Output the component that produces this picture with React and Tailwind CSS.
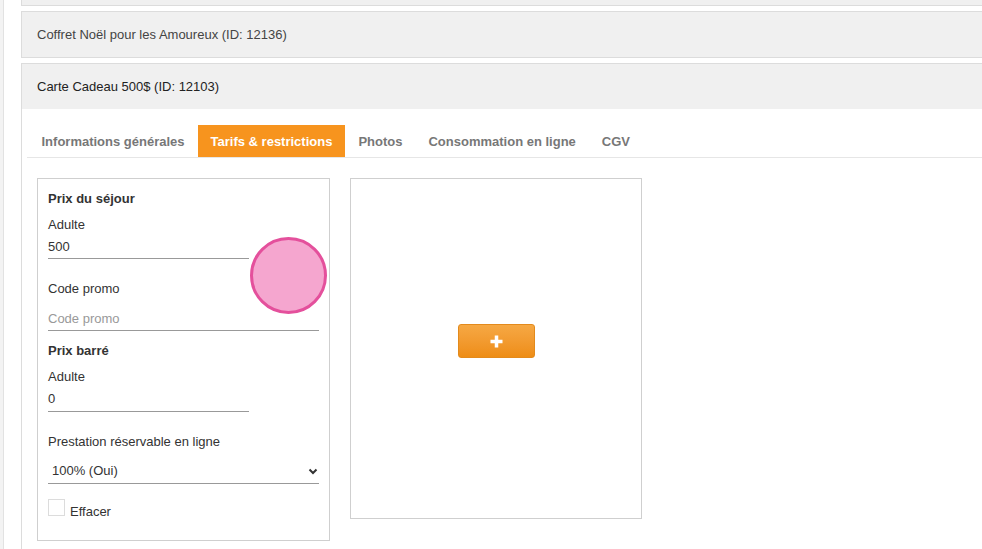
import React from "react";

const font = { fontFamily: '"Liberation Sans", Arial, sans-serif' };

function Label({ children, className = "" }) {
  return <div className={`text-[13px] leading-[18px] text-[#333] ${className}`}>{children}</div>;
}

function Input({ value, placeholder, wide, className = "", pb = "pb-[2px]" }) {
  return (
    <div
      className={`pt-[1px] ${pb} border-b border-[#999] text-[13px] leading-[18px] ${wide ? "w-full" : "w-[201px]"} ${className}`}
    >
      {value ? <span className="text-[#333]">{value}</span> : <span className="text-[#999]">{placeholder}</span>}
    </div>
  );
}

export default function App() {
  const tabs = ["Informations générales", "Tarifs & restrictions", "Photos", "Consommation en ligne", "CGV"];
  return (
    <div className="relative w-[982px] h-[549px] overflow-hidden bg-white flex" style={font}>
      {/* left strip */}
      <div className="w-[4px] bg-[#f3f3f3] border-r border-[#e2e2e2] shrink-0" />
      <div className="flex-1 pl-[17px] flex flex-col">
        {/* top panel (cut) */}
        <div className="h-[6px] bg-[#f0f0f0] border-l border-b border-[#dcdcdc] -mr-[10px]" />
        {/* panel 2 */}
        <div className="mt-[5px] h-[47px] bg-[#f0f0f0] border border-[#dcdcdc] -mr-[10px] flex items-center pl-[15px] text-[13px] text-[#444]">
          Coffret Noël pour les Amoureux (ID: 12136)
        </div>
        {/* panel 3 */}
        <div className="mt-[5px] flex-1 border-l border-t border-[#dcdcdc] -mr-[10px] flex flex-col">
          <div className="h-[45px] bg-[#f0f0f0] flex items-center pl-[15px] text-[13px] text-[#222]">
            Carte Cadeau 500$ (ID: 12103)
          </div>
          <div className="flex-1 bg-white pl-[5px]">
            {/* tabs */}
            <div className="mt-[16px] pl-[1.5px] flex border-b border-[#e6e6e6]">
              {tabs.map((t, i) => (
                <div
                  key={t}
                  className={`h-[32px] pt-[1px] px-[13px] flex items-center text-[13px] font-bold ${
                    i === 1 ? "bg-[#f7941e] text-white" : "text-[#777]"
                  }`}
                >
                  {t}
                </div>
              ))}
            </div>
            {/* content */}
            <div className="mt-[20px] ml-[10px] flex gap-[20px] items-start">
              {/* left form box */}
              <div className="w-[293px] h-[363px] border border-[#cfcfcf] px-[10px] pt-[11px]">
                <Label className="font-bold">Prix du séjour</Label>
                <Label className="mt-[8px]">Adulte</Label>
                <Input value="500" className="mt-[3px]" />
                <Label className="mt-[21px]">Code promo</Label>
                <Input placeholder="Code promo" wide className="mt-[11px]" />
                <Label className="mt-[11px] font-bold">Prix barré</Label>
                <Label className="mt-[8px]">Adulte</Label>
                <Input value="0" className="mt-[3px]" pb="pb-[3px]" />
                <Label className="mt-[21px]">Prestation réservable en ligne</Label>
                <div className="mt-[10px] pt-[1px] pb-[3px] border-b border-[#999] flex items-center justify-between pl-[4px] pr-[1px] text-[13px] leading-[18px] text-[#333]">
                  <span>100% (Oui)</span>
                  <svg width="10" height="7" viewBox="0 0 10 7" className="mt-[1px]">
                    <polyline points="1.5,1.5 5,5 8.5,1.5" fill="none" stroke="#333" strokeWidth="2" />
                  </svg>
                </div>
                <div className="mt-[15px] flex items-start">
                  <div className="w-[17px] h-[17px] border border-[#dcdcdc] bg-white shrink-0" />
                  <span className="ml-[5px] mt-[4px] text-[13px] leading-[18px] text-[#333]">Effacer</span>
                </div>
              </div>
              {/* right photo box */}
              <div className="w-[292px] h-[341px] border border-[#cfcfcf] flex justify-center">
                <button className="mt-[145px] w-[77px] h-[34px] rounded-[3px] border border-[#e38a1c] bg-gradient-to-b from-[#f6a843] to-[#ee8d14] flex items-center justify-center">
                  <svg width="13" height="13" viewBox="0 0 13 13">
                    <path d="M6.5 0.5v12M0.5 6.5h12" stroke="white" strokeWidth="3.5" />
                  </svg>
                </button>
              </div>
            </div>
          </div>
        </div>
      </div>
      {/* click marker overlay */}
      <div className="absolute left-[250px] top-[237px] w-[77px] h-[77px] rounded-full bg-[#f5a6cf] border-[3px] border-[#e4509c]" />
    </div>
  );
}
